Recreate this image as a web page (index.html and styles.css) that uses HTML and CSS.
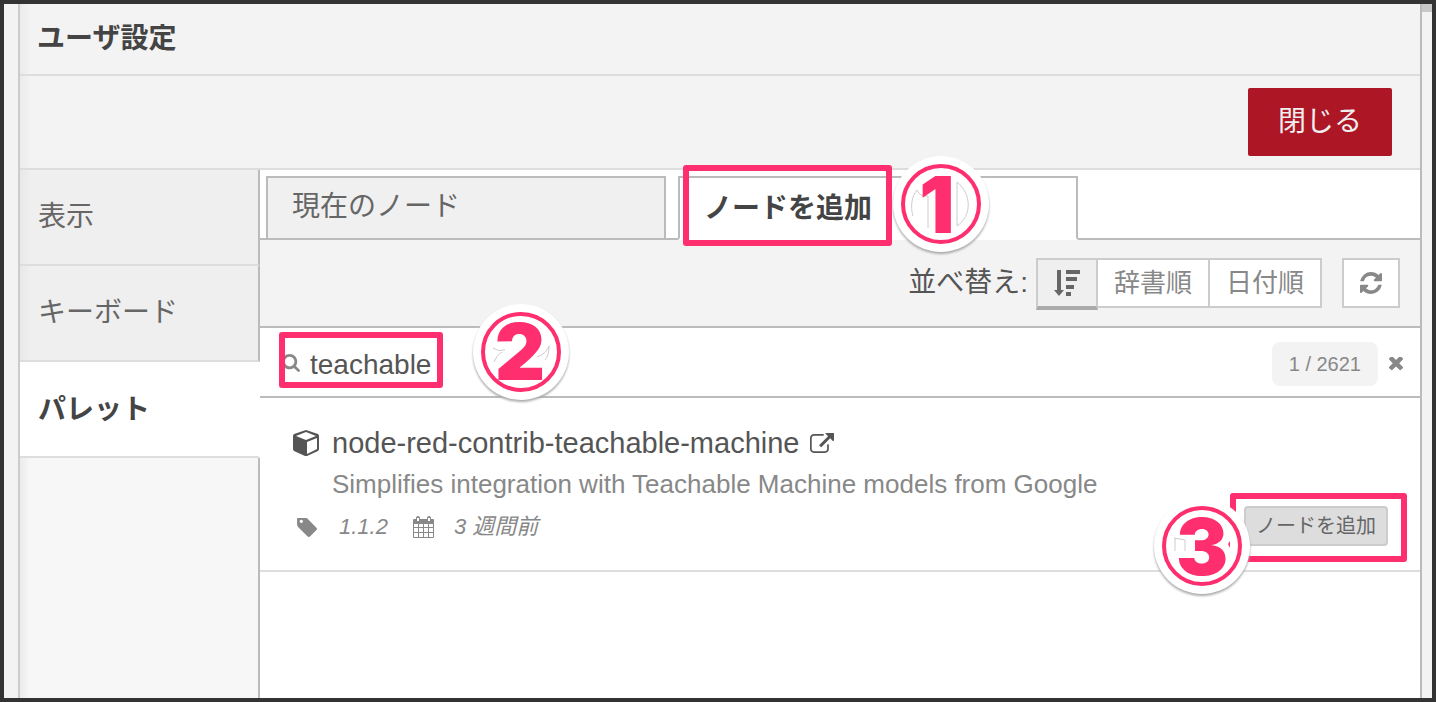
FILE: index.html
```html
<!DOCTYPE html>
<html lang="ja">
<head>
<meta charset="utf-8">
<title>ユーザ設定</title>
<link rel="stylesheet" href="styles.css">
</head>
<body>
<div class="frame">
  <main class="panel">
    <h1 class="title">ユーザ設定</h1>
    <div class="actions"><button class="close" type="button">閉じる</button></div>
    <div class="content">
      <nav class="side">
        <button class="side-item" type="button">表示</button>
        <button class="side-item" type="button">キーボード</button>
        <button class="side-item side-active" type="button">パレット</button>
        <div class="side-rest"></div>
      </nav>
      <section class="palette">
        <div class="tabs">
          <button class="tab" type="button">現在のノード</button>
          <div class="tab-wrap">
            <button class="tab tab-active" type="button">ノードを追加</button>
            <span class="mark mark-tab"></span>
            <svg class="step step-tab" viewBox="0 0 96 96">
              <circle class="disc" cx="48" cy="48" r="48"/>
              <path class="ghost" d="M20 60C17 50 19 40 24 34Q27 41 35 40M35 40V72M64 26V70M64 26C79 38 79 60 64 70"/>
              <circle class="ring" cx="48" cy="48" r="38"/>
              <text class="digit" x="44" y="77">1</text>
            </svg>
          </div>
        </div>
        <div class="sortbar">
          <span class="sort-label">並べ替え:</span>
          <div class="group">
            <button class="tool tool-active" type="button" aria-label="関連順">
              <svg class="icon-sort" viewBox="0 0 26 26"><path d="M3 0h4v20h3l-5 6-5-6h3zM12 0h14v4H12zM12 7h11v4H12zM12 15h8v4h-8zM12 22h5v4h-5z"/></svg>
            </button>
            <button class="tool" type="button">辞書順</button>
            <button class="tool" type="button">日付順</button>
          </div>
          <button class="tool tool-refresh" type="button" aria-label="更新">
            <svg class="icon-refresh" viewBox="128 128 1536 1536"><path d="M1639 1056q0 5-1 7-64 268-268 434.500t-478 166.500q-146 0-282.500-55t-243.500-157l-129 129q-19 19-45 19t-45-19-19-45v-448q0-26 19-45t45-19h448q26 0 45 19t19 45-19 45l-137 137q71 66 161 102t187 36q134 0 250-65t186-179q11-17 53-117 8-23 30-23h192q13 0 22.500 9.500t9.500 22.500zm25-800v448q0 26-19 45t-45 19h-448q-26 0-45-19t-19-45 19-45l138-138q-148-137-349-137-134 0-250 65t-186 179q-11 17-53 117-8 23-30 23h-199q-13 0-22.500-9.500t-9.500-22.500v-7q65-268 270-434.500t480-166.500q146 0 284 55.500t245 156.500l130-129q19-19 45-19t45 19 19 45z"/></svg>
          </button>
        </div>
        <div class="search">
          <label class="search-icon" for="q" aria-label="検索">
            <svg viewBox="64 128 1664 1664"><path d="M1216 832q0-185-131.500-316.500t-316.500-131.500-316.500 131.500-131.500 316.500 131.500 316.500 316.500 131.500 316.500-131.500 131.500-316.500zm512 832q0 52-38 90t-90 38q-54 0-90-38l-343-342q-179 124-399 124-143 0-273.500-55.500t-225-150-150-225-55.500-273.500 55.500-273.500 150-225 225-150 273.500-55.500 273.500 55.500 225 150 150 225 55.500 273.500q0 220-124 399l343 343q37 37 37 90z"/></svg>
          </label>
          <input class="query" id="q" type="text" value="teachable">
          <span class="count">1 / 2621</span>
          <button class="clear" type="button" aria-label="クリア">
            <svg viewBox="302 434 1188 1188"><path d="M1490 1322q0 40-28 68l-136 136q-28 28-68 28t-68-28l-294-294-294 294q-28 28-68 28t-68-28l-136-136q-28-28-28-68t28-68l294-294-294-294q-28-28-28-68t28-68l136-136q28-28 68-28t68 28l294 294 294-294q28-28 68-28t68 28l136 136q28 28 28 68t-28 68l-294 294 294 294q28 28 28 68z"/></svg>
          </button>
          <span class="mark mark-search"></span>
          <svg class="step step-search" viewBox="0 0 96 96">
            <circle class="disc" cx="48" cy="48" r="48"/>
            <path class="ghost" d="M20 44Q25 48 32 46M21 58Q24 50 29 48M64 53Q73 50 76 42Q76 52 72 56"/>
            <circle class="ring" cx="48" cy="48" r="38"/>
            <text class="digit" x="47" y="76">2</text>
          </svg>
        </div>
        <article class="module">
          <svg class="cube" viewBox="0 0 26 26"><path fill-rule="evenodd" d="M13 0L25 4Q26 5 26 6V19Q26 20 25 21L14 26H12L1 21Q0 20 0 19V6Q0 5 1 4zM13 2L3 6L13 10L23 6zM24 8L14 12V24L24 19z"/></svg>
          <a class="name" href="#">node-red-contrib-teachable-machine
            <svg class="link-icon" viewBox="0 64 1792 1536"><path d="M1408 928v320q0 119-84.500 203.500t-203.500 84.500h-832q-119 0-203.500-84.500t-84.500-203.500v-832q0-119 84.500-203.500t203.500-84.500h704q14 0 23 9t9 23v64q0 14-9 23t-23 9h-704q-66 0-113 47t-47 113v832q0 66 47 113t113 47h832q66 0 113-47t47-113v-320q0-14 9-23t23-9h64q14 0 23 9t9 23zm384-864v512q0 26-19 45t-45 19-45-19l-176-176-652 652q-10 10-23 10t-23-10l-114-114q-10-10-10-23t10-23l652-652-176-176q-19-19-19-45t19-45 45-19h512q26 0 45 19t19 45z"/></svg>
          </a>
          <p class="desc">Simplifies integration with Teachable Machine models from Google</p>
          <div class="meta">
            <svg class="tag" viewBox="128 192 1515 1451"><path d="M576 448q0-53-37.500-90.500t-90.500-37.500-90.500 37.500-37.500 90.500 37.500 90.500 90.500 37.500 90.500-37.500 37.500-90.500zm1067 576q0 53-37 90l-491 492q-39 37-91 37-53 0-90-37l-715-716q-38-37-64.500-101t-26.500-117v-416q0-52 38-90t90-38h416q53 0 117 26.500t102 64.500l715 714q37 39 37 91z"/></svg>
            <span class="version">1.1.2</span>
            <svg class="calendar" viewBox="0 0 21 22"><path fill-rule="evenodd" d="M1 3H3V2Q3 0 5 0T7 2V3H14V2Q14 0 16 0T18 2V3H20Q21 3 21 4V21Q21 22 20 22H1Q0 22 0 21V4Q0 3 1 3zM4 2V5H6V2zM15 2V5H17V2zM1 8V11H5V8zM6 8V11H10V8zM11 8V11H15V8zM16 8V11H20V8zM1 12V16H5V12zM6 12V16H10V12zM11 12V16H15V12zM16 12V16H20V12zM1 17V21H5V17zM6 17V21H10V17zM11 17V21H15V17zM16 17V21H20V17z"/></svg>
            <span>3 週間前</span>
          </div>
          <button class="add" type="button">ノードを追加</button>
          <span class="mark mark-add"></span>
          <svg class="step step-add" viewBox="0 0 96 96">
            <circle class="disc" cx="48" cy="48" r="48"/>
            <path class="ghost" d="M20 40L31 42M21 40V53M31 42V53"/>
            <path class="tip" d="M76 43L74 46L76 50z"/>
            <circle class="ring" cx="48" cy="48" r="38"/>
            <text class="digit" x="48" y="77">3</text>
          </svg>
        </article>
      </section>
    </div>
  </main>
  <div class="gutter"><div class="thumb"></div></div>
</div>
</body>
</html>
```
FILE: styles.css
```css
* { box-sizing: border-box; }

body {
  margin: 0;
  background: #333;
  color: #555;
  font-family: "Liberation Sans", "Noto Sans CJK JP", sans-serif;
  font-size: 28px;
  line-height: 40px;
}

button, input {
  margin: 0;
  border: 0;
  color: inherit;
  font: inherit;
}

svg { display: block; fill: currentColor; }

.frame {
  display: flex;
  min-height: 100vh;
  padding-left: 14px;
  border: 4px solid #333;
  background: #f3f3f3;
}

.panel {
  display: flex;
  flex: 1;
  flex-direction: column;
  border-right: 2px solid #bbb;
  border-left: 2px solid #ccc;
  background: linear-gradient(to right, #ebebeb, #f3f3f3 10px);
}

.gutter { width: 10px; }
.thumb { height: 8px; background: #c8c8c8; }

.title {
  margin: 0;
  padding: 15px 17px;
  border-bottom: 2px solid #ddd;
  color: #444;
  font-size: 28px;
  line-height: 40px;
}

.actions {
  display: flex;
  justify-content: flex-end;
  padding: 12px 28px;
  border-bottom: 2px solid #ddd;
}

.close {
  padding: 14px 30px;
  border-radius: 2px;
  background: #ad1625;
  color: #eee;
}

.content { display: flex; flex: 1; }

.side {
  display: flex;
  flex-direction: column;
  width: 240px;
}

.side-item {
  padding: 27px 18px;
  border-right: 2px solid #bbb;
  border-bottom: 2px solid #ddd;
  background: linear-gradient(to right, #e8e8e8, #efefef 10px);
  color: #666;
  text-align: left;
}

.side-active {
  padding: 28px 18px 26px;
  border-right-color: #fff;
  background: #fff;
  color: #444;
  font-weight: bold;
}

.side-rest {
  flex: 1;
  border-right: 2px solid #bbb;
  background: linear-gradient(to right, #ebebeb, #f7f7f7 10px);
}

.palette { flex: 1; background: #fff; }

.tabs {
  display: flex;
  gap: 12px;
  padding: 6px 6px 0;
  background: linear-gradient(to top, #bbb 2px, #fff 2px);
}

.tab {
  width: 400px;
  padding: 9px 24px 11px;
  border: 2px solid #bbb;
  background: #f0f0f0;
  color: #666;
  text-align: left;
}

.tab-wrap { position: relative; }

.tab-active {
  padding: 11px 24px 9px;
  border-bottom-color: #fff;
  background: #fff;
  color: #444;
  font-weight: bold;
}

.sortbar {
  display: flex;
  align-items: flex-start;
  padding: 18px 20px 16px;
  border-bottom: 2px solid #bbb;
  background: #f3f3f3;
}

.sort-label { margin: 5px 8px 0 auto; }
.group { display: flex; align-items: flex-start; }

.tool {
  display: flex;
  align-items: center;
  justify-content: center;
  height: 50px;
  padding: 0 16px;
  border: 2px solid #ccc;
  background: #fff;
  color: #888;
  font-size: 26px;
}

.tool + .tool { border-left: 0; }

.tool-active {
  height: 52px;
  border-bottom: 4px solid #aaa;
  background: #efefef;
  color: #666;
}

.tool-refresh { margin-left: 20px; }
.icon-sort { width: 26px; height: 26px; }
.icon-refresh { width: 22px; height: 22px; }

.search {
  display: flex;
  position: relative;
  align-items: center;
  height: 70px;
  padding: 2px 17px 0 22px;
  border-bottom: 2px solid #bbb;
}

.search-icon { width: 18px; color: #888; }

.query {
  flex: 1;
  min-width: 0;
  padding: 4px 0 0;
  margin-left: 10px;
  outline: 0;
  background: none;
}

.count {
  padding: 2px 17px;
  margin-top: 2px;
  border-radius: 8px;
  background: #f3f3f3;
  color: #888;
  font-size: 20px;
}

.clear {
  width: 14px;
  margin-left: 11px;
  padding: 2px 0 0;
  background: none;
  color: #888;
}

.module {
  display: grid;
  position: relative;
  grid-template-columns: 26px 1fr auto;
  column-gap: 13px;
  padding: 24px 32px 24px 33px;
  border-bottom: 2px solid #ddd;
}

.cube { width: 26px; height: 26px; margin-top: 8px; }

.name {
  display: flex;
  grid-column: 2 / 4;
  gap: 11px;
  color: #555;
  font-size: 29px;
  line-height: 42px;
  text-decoration: none;
}

.link-icon { width: 24px; height: 21px; margin-top: 11px; }

.desc {
  grid-column: 2 / 4;
  margin: 0;
  color: #888;
  font-size: 26px;
  line-height: 40px;
}

.meta {
  display: flex;
  grid-column: 1 / 3;
  align-items: center;
  padding: 4px 0 0 4px;
  color: #888;
  font-size: 22px;
  font-style: italic;
  line-height: 38px;
}

.tag { width: 20px; height: 19px; }
.version { margin: 0 25px 0 22px; }
.calendar { width: 21px; height: 22px; margin-right: 20px; }

.add {
  padding: 0 10px;
  margin-top: 2px;
  border: 2px solid #ccc;
  border-radius: 4px;
  background: #ddd;
  color: #666;
  font-size: 20px;
  line-height: 36px;
}

/* Numbered walkthrough overlays */
.mark {
  position: absolute;
  z-index: 1;
  border: 6px solid #ff2e6e;
  border-radius: 3px;
  pointer-events: none;
}

.mark-tab { top: -11px; left: 5px; width: 209px; height: 81px; }
.mark-search { top: 4px; left: 19px; width: 164px; height: 56px; }
.mark-add { top: 95px; right: 13px; width: 177px; height: 69px; }

.step {
  position: absolute;
  z-index: 2;
  width: 96px;
  height: 96px;
  overflow: visible;
  filter: drop-shadow(0 2px 1px #aaa);
  pointer-events: none;
}

.step-tab { top: -20px; left: 215px; }
.step-search { top: -24px; left: 213px; }
.step-add { top: 100px; right: 170px; }

.disc { fill: #fff; }
.ring { fill: none; stroke: #ff2e6e; stroke-width: 4px; }
.ghost { fill: none; stroke: #ccc; stroke-width: 1px; }
.tip { fill: #ff2e6e; }

.digit {
  fill: #ff2e6e;
  font-family: Inter, "Liberation Sans", sans-serif;
  font-size: 78px;
  font-weight: 900;
  text-anchor: middle;
}
```
